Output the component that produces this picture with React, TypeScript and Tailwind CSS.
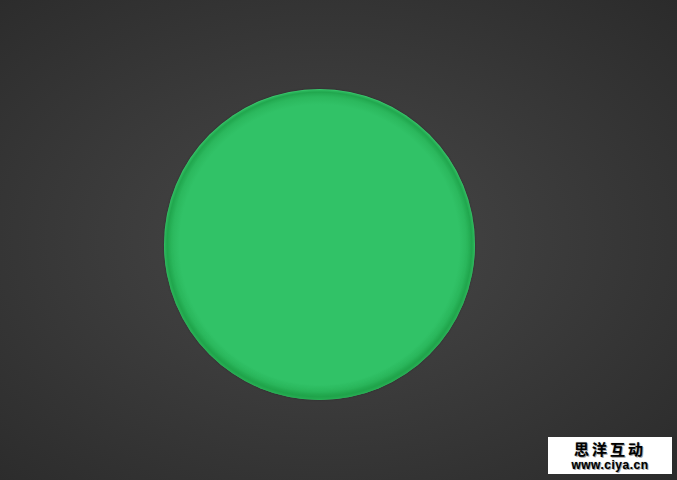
import React from 'react';

const App: React.FC = () => {
    return (
        <div className="relative w-[677px] h-[480px] overflow-hidden bg-[radial-gradient(ellipse_at_48%_50%,#484848_0%,#3b3b3b_45%,#2b2b2b_100%)]">
            <div className="pt-[89px] pl-[164px]">
                {/* green button */}
                <div className="w-[311px] h-[311px] rounded-full shadow-[0_0_2px_rgba(0,0,0,0.35),inset_0_-5px_7px_rgba(30,160,70,0.7)] bg-[radial-gradient(circle_closest-side,#31c267_0%,#31c267_90%,#2bb85d_95%,#22a84f_98%,#2db95e_99.2%,#40d275_100%)]" />
            </div>

            {/* watermark */}
            <div className="absolute left-[548px] top-[437px] w-[124px] h-[37px] bg-white flex flex-col items-center justify-center leading-none">
                <div className="h-[15px] text-[15px] leading-[15px] font-bold tracking-[3px] text-black [font-family:'Noto_Sans_CJK_SC',sans-serif] [text-shadow:0_0_1px_#888,1px_1px_0_#aaa]">思洋互动</div>
                <div className="mt-[3px] h-[12px] text-[12px] leading-[12px] font-bold tracking-[0.5px] text-black [font-family:'Liberation_Sans',sans-serif] [text-shadow:0_0_1px_#888,1px_1px_0_#aaa]">www.ciya.cn</div>
            </div>
        </div>
    );
};

export default App;
